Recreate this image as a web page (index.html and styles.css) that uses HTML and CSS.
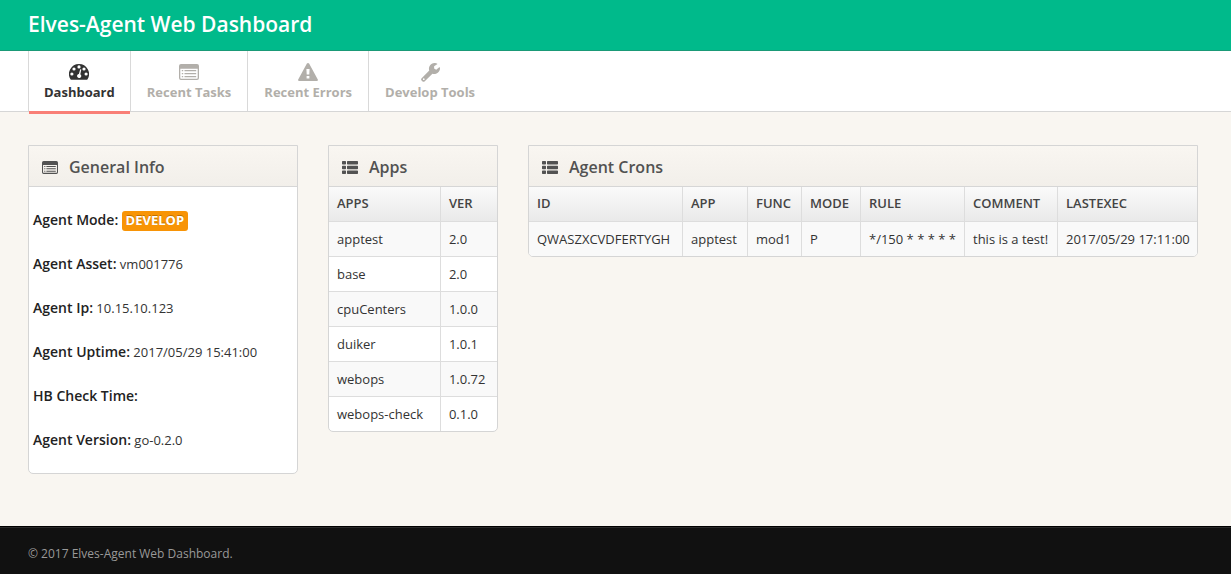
FILE: index.html
```html
<!DOCTYPE html>
<html lang="en">
<head>
<meta charset="utf-8">
<title>Elves-Agent Web Dashboard</title>
<link rel="stylesheet" href="styles.css">
</head>
<body>
<svg class="sprite" aria-hidden="true">
  <symbol id="i-dash" viewBox="0 0 20 16"><path fill-rule="evenodd" d="M10 0a10 10 0 0 0-8.500 15.300q.3.500.8.500h15.400q.5 0 .8-.5A10 10 0 0 0 10 0zM10 1.300a1.600 1.600 0 1 1 0 3.200 1.600 1.600 0 0 1 0-3.200zM5 3.400a1.600 1.600 0 1 1 0 3.200 1.600 1.600 0 0 1 0-3.200zM15 3.400a1.600 1.600 0 1 1 0 3.200 1.600 1.600 0 0 1 0-3.200zM2.900 8.400a1.600 1.600 0 1 1 0 3.200 1.600 1.600 0 0 1 0-3.200zM17.100 8.400a1.600 1.600 0 1 1 0 3.200 1.600 1.600 0 0 1 0-3.200zM11.200 5.300l1.100.3-1 4.600a2.100 2.100 0 1 1-1.400-.3z"/></symbol>
  <symbol id="i-list" viewBox="0 0 20 16"><path fill-rule="evenodd" d="M2 0h16a2 2 0 0 1 2 2v12a2 2 0 0 1-2 2H2a2 2 0 0 1-2-2V2a2 2 0 0 1 2-2zM1.300 4.800v9.200q0 .7.700.7h16q.7 0 .7-.7V4.800zM2.800 6h1.400v1.300H2.800zM5.500 6h11.700v1.300H5.500zM2.800 9h1.400v1.300H2.800zM5.500 9h11.700v1.300H5.500zM2.800 12h1.400v1.300H2.800zM5.500 12h11.700v1.300H5.500z"/></symbol>
  <symbol id="i-warn" viewBox="0 0 20 18"><path fill-rule="evenodd" d="M8.900.6q1.100-1.200 2.200 0l8.700 15.800q.5 1.300-.9 1.600H1.100q-1.400-.3-.9-1.600zM8.400 6l.3 5.600h2.600l.3-5.600zM8.600 13v2.500h2.800V13z"/></symbol>
  <symbol id="i-wrench" viewBox="0 0 20 20"><path fill-rule="evenodd" d="M19.200 4.600q.7-.3.800.5a6 6 0 0 1-8 6.100l-8 8q-1.300 1.200-2.600.1l-.8-.8q-1.100-1.300.1-2.500l8-8A6 6 0 0 1 14.800 0q1.400 0 2.300.7.400.4-.1.700l-3.200 1.900v2.600l2.200 1.200zM2.900 16.100a.9.900 0 1 0 0 1.800.9.900 0 0 0 0-1.800z"/></symbol>
  <symbol id="i-rows" viewBox="0 0 16 13"><path d="M.7 0h2.600q.7 0 .7.700v2q0 .7-.7.700H.7q-.7 0-.7-.7v-2Q0 0 .7 0zM5.700 0h9.600q.7 0 .7.700v2q0 .7-.7.700H5.700q-.7 0-.7-.7v-2Q5 0 5.700 0zM.7 4.800h2.600q.7 0 .7.700v2q0 .7-.7.700H.7q-.7 0-.7-.7v-2q0-.7.700-.7zM5.700 4.800h9.600q.7 0 .7.700v2q0 .7-.7.700H5.700q-.7 0-.7-.7v-2q0-.7.700-.7zM.7 9.600h2.600q.7 0 .7.700v2q0 .7-.7.700H.7q-.7 0-.7-.7v-2q0-.7.700-.7zM5.700 9.600h9.600q.7 0 .7.700v2q0 .7-.7.700H5.700q-.7 0-.7-.7v-2q0-.7.700-.7z"/></symbol>
</svg>
<header class="topbar"><div class="container"><a class="brand" href="#">Elves-Agent Web Dashboard</a></div></header>
<nav class="subnav"><div class="container">
  <ul class="mainnav">
    <li class="active"><a href="#"><span class="nav-icon"><svg width="20" height="16"><use href="#i-dash"/></svg></span>Dashboard</a></li>
    <li><a href="#"><span class="nav-icon"><svg width="20" height="16"><use href="#i-list"/></svg></span>Recent Tasks</a></li>
    <li><a href="#"><span class="nav-icon"><svg width="20" height="18"><use href="#i-warn"/></svg></span>Recent Errors</a></li>
    <li><a href="#"><span class="nav-icon"><svg width="19" height="19"><use href="#i-wrench"/></svg></span>Develop Tools</a></li>
  </ul>
</div></nav>
<main class="main"><div class="container grid">
  <section class="widget">
    <h3 class="widget-header"><svg width="16" height="13"><use href="#i-list"/></svg>General Info</h3>
    <div class="info">
      <p><b>Agent Mode:</b> <span class="label">DEVELOP</span></p>
      <p><b>Agent Asset:</b> vm001776</p>
      <p><b>Agent Ip:</b> 10.15.10.123</p>
      <p><b>Agent Uptime:</b> 2017/05/29 15:41:00</p>
      <p><b>HB Check Time:</b></p>
      <p><b>Agent Version:</b> go-0.2.0</p>
    </div>
  </section>
  <section class="widget">
    <h3 class="widget-header"><svg width="16" height="13"><use href="#i-rows"/></svg>Apps</h3>
    <table>
      <colgroup><col class="w-name"><col></colgroup>
      <thead><tr><th>APPS</th><th>VER</th></tr></thead>
      <tbody>
        <tr><td>apptest</td><td>2.0</td></tr>
        <tr><td>base</td><td>2.0</td></tr>
        <tr><td>cpuCenters</td><td>1.0.0</td></tr>
        <tr><td>duiker</td><td>1.0.1</td></tr>
        <tr><td>webops</td><td>1.0.72</td></tr>
        <tr><td>webops-check</td><td>0.1.0</td></tr>
      </tbody>
    </table>
  </section>
  <section class="widget">
    <h3 class="widget-header"><svg width="16" height="13"><use href="#i-rows"/></svg>Agent Crons</h3>
    <table>
      <colgroup><col class="w-id"><col class="w-app"><col class="w-func"><col class="w-mode"><col class="w-rule"><col class="w-comment"><col></colgroup>
      <thead><tr><th>ID</th><th>APP</th><th>FUNC</th><th>MODE</th><th>RULE</th><th>COMMENT</th><th>LASTEXEC</th></tr></thead>
      <tbody><tr><td>QWASZXCVDFERTYGH</td><td>apptest</td><td>mod1</td><td>P</td><td>*/150 * * * * *</td><td>this is a test!</td><td>2017/05/29 17:11:00</td></tr></tbody>
    </table>
  </section>
</div></main>
<footer class="footer"><div class="container">© 2017 Elves-Agent Web Dashboard.</div></footer>
</body>
</html>
```
FILE: styles.css
```css
* { box-sizing: border-box; }
body {
  margin: 0;
  min-height: 100vh;
  display: flex;
  flex-direction: column;
  background: #f9f6f1;
  color: #333;
  font: 13px/18px "Open Sans", sans-serif;
}
a { color: inherit; text-decoration: none; }
svg { fill: currentColor; display: block; }
.sprite { position: absolute; width: 0; height: 0; }
.container { padding: 0 33px 0 28px; }

.topbar { background: #00ba8b; border-bottom: 1px solid #1a9a77; color: #fff; }
.brand {
  display: block;
  padding: 14px 0 16px;
  font-size: 21px;
  line-height: 20px;
  font-weight: 600;
}

.subnav { background: #fff; border-bottom: 1px solid #d6d6d6; height: 61px; }
.mainnav { display: flex; margin: 0; padding: 0; list-style: none; }
.mainnav li { height: 60px; border-right: 1px solid #d9d9d9; }
.mainnav li:first-child { border-left: 1px solid #d9d9d9; }
.mainnav li:last-child { border-right: 0; }
.mainnav a {
  display: block;
  height: 60px;
  padding: 10px 16px 0;
  color: #b2afaa;
  font-size: 13px;
  font-weight: 700;
  line-height: 18px;
  text-align: center;
}
.mainnav .active a {
  height: 63px;
  padding: 10px 15px 0;
  border-bottom: 3px solid #f97f76;
  color: #333;
}
.nav-icon { display: flex; height: 22px; align-items: center; justify-content: center; }

.main { flex: 1 0 auto; padding: 33px 0 52px; }
.grid {
  display: grid;
  grid-template-columns: 27fr 17fr 67fr;
  gap: 30px;
  align-items: start;
}
.widget {
  min-width: 0;
  border: 1px solid #d5d5d5;
  border-radius: 0 0 5px 5px;
  background: #fff;
  overflow: hidden;
}
.widget-header {
  display: flex;
  align-items: center;
  gap: 11px;
  height: 41px;
  margin: 0;
  padding: 2px 13px 0;
  border-bottom: 1px solid #d6d6d6;
  background: linear-gradient(#f9f6f1, #f2efea);
  color: #525252;
  font-size: 16px;
  font-weight: 600;
}
.info { padding: 11px 4px; }
.info p { height: 44px; margin: 0; line-height: 44px; white-space: nowrap; }
.info b { font-size: 14px; font-weight: 600; color: #222; }
.label {
  display: inline-block;
  padding: 1px 4px 3px;
  border-radius: 3px;
  background: #f89406;
  color: #fff;
  font-size: 13px;
  font-weight: 700;
  line-height: 16px;
  text-shadow: 0 -1px 0 rgba(0, 0, 0, .25);
}

table { width: 100%; border-collapse: separate; border-spacing: 0; table-layout: fixed; }
th, td { height: 35px; padding: 0 8px; text-align: left; white-space: nowrap; }
th {
  height: 34px;
  padding-bottom: 2px;
  background: linear-gradient(#fafafa, #e9e9e9);
  color: #444;
  font-weight: 600;
}
td { border-top: 1px solid #ddd; }
th + th, td + td { border-left: 1px solid #ddd; }
tbody tr:nth-child(odd) { background: #f9f9f9; }
.w-name { width: 66%; }
.w-id { width: 153px; }
.w-app { width: 65px; }
.w-func { width: 54px; }
.w-mode { width: 59px; }
.w-rule { width: 104px; }
.w-comment { width: 93px; }

.footer {
  border-top: 1px solid #000;
  background: #111;
  color: #999;
  padding: 18px 0 11px;
  font-size: 12px;
  box-shadow: inset 0 1px #292929;
}
```
